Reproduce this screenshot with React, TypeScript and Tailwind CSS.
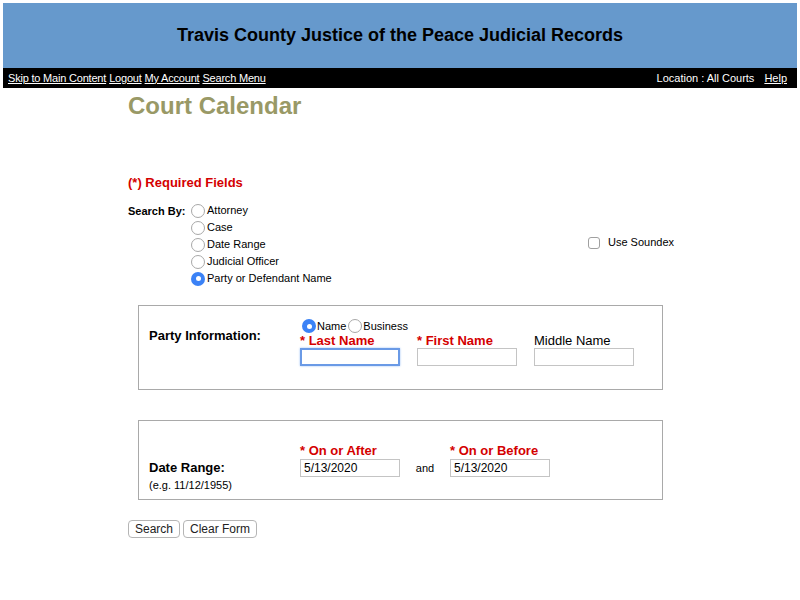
import React from 'react';

function Radio({ checked = false }: { checked?: boolean }) {
  if (checked) {
    return (
      <span className="inline-flex h-[14px] w-[14px] shrink-0 items-center justify-center rounded-full bg-[#3b82f6]">
        <span className="h-[5px] w-[5px] rounded-full bg-white" />
      </span>
    );
  }
  return <span className="inline-block h-[14px] w-[14px] shrink-0 rounded-full border border-[#a8a8a8] bg-white" />;
}

function TextBox({ value = '', focused = false }: { value?: string; focused?: boolean }) {
  return (
    <div
      className={
        focused
          ? 'h-[18px] w-[100px] border-2 border-[#6a9ae6] bg-white shadow-[0_0_2px_#9cc0f5]'
          : 'h-[18px] w-[100px] border border-[#c4c4c4] bg-white pl-[3px] text-[12px] leading-[17px] text-black'
      }
    >
      {value}
    </div>
  );
}

export default function App() {
  const searchOptions = ['Attorney', 'Case', 'Date Range', 'Judicial Officer', 'Party or Defendant Name'];

  return (
    <div className="h-[600px] w-[800px] bg-white px-[3px] pt-[3px] font-['Liberation_Sans',Arial,sans-serif] text-black">
      {/* Banner */}
      <div className="flex h-[65px] items-center justify-center bg-[#6699cc] pb-[2px]">
        <h1 className="text-[18px] font-bold leading-[20px]">Travis County Justice of the Peace Judicial Records</h1>
      </div>

      {/* Nav bar */}
      <div className="flex h-[20px] items-center justify-between bg-black px-[5px] text-[11px] leading-[13px] text-white">
        <div className="flex gap-[3px] tracking-[-0.2px]">
          <a className="underline">Skip to Main Content</a>
          <a className="underline">Logout</a>
          <a className="underline">My Account</a>
          <a className="underline">Search Menu</a>
        </div>
        <div className="flex gap-[10px] pr-[5px]">
          <span>Location : All Courts</span>
          <a className="underline">Help</a>
        </div>
      </div>

      <div className="pl-[125px]">
        <h2 className="mt-[4px] text-[24px] font-bold leading-[28px] text-[#999966]">Court Calendar</h2>

        <p className="mt-[55px] text-[13px] font-bold leading-[16px] text-[#d40000]">(*) Required Fields</p>

        {/* Search by */}
        <div className="mt-[11px] flex">
          <div className="w-[63px] pt-[3px] text-[11px] font-bold leading-[13px]">Search By:</div>
          <div className="flex w-[397px] flex-col">
            {searchOptions.map((opt, i) => (
              <label key={opt} className="flex h-[17px] items-center gap-[2px] text-[11px]">
                <Radio checked={i === searchOptions.length - 1} />
                <span>{opt}</span>
              </label>
            ))}
          </div>
          <label className="mt-[34px] flex h-[13px] items-center gap-[8px] self-start text-[11px]">
            <span className="h-[12px] w-[12px] rounded-[3px] border border-[#a0a0a0] bg-white" />
            <span>Use Soundex</span>
          </label>
        </div>

        {/* Party information */}
        <div className="ml-[10px] mt-[18px] flex h-[85px] w-[525px] border border-[#a9a9a9] pl-[10px]">
          <div className="w-[151px] pt-[22px] text-[13px] font-bold leading-[16px]">Party Information:</div>
          <div className="pt-[13px]">
            <div className="ml-[2px] flex h-[14px] items-center gap-[1px] text-[11px]">
              <Radio checked />
              <span className="mr-[1px]">Name</span>
              <Radio />
              <span>Business</span>
            </div>
            <div className="flex gap-[17px]">
              <div>
                <div className="pt-[1px] text-[13px] font-bold leading-[14px] text-[#d40000]">* Last Name</div>
                <TextBox focused />
              </div>
              <div>
                <div className="pt-[1px] text-[13px] font-bold leading-[14px] text-[#d40000]">* First Name</div>
                <TextBox />
              </div>
              <div>
                <div className="pt-[1px] text-[13px] leading-[14px]">Middle Name</div>
                <TextBox />
              </div>
            </div>
          </div>
        </div>

        {/* Date range */}
        <div className="ml-[10px] mt-[30px] flex h-[80px] w-[525px] border border-[#a9a9a9] pl-[10px]">
          <div className="w-[151px] pt-[39px]">
            <div className="text-[13px] font-bold leading-[16px]">Date Range:</div>
            <div className="pt-[1px] text-[11px] leading-[16px]">(e.g. 11/12/1955)</div>
          </div>
          <div className="flex items-end self-start pt-[22px]">
            <div>
              <div className="text-[13px] font-bold leading-[16px] text-[#d40000]">* On or After</div>
              <TextBox value="5/13/2020" />
            </div>
            <div className="flex h-[18px] w-[50px] items-center justify-center text-[11px]">and</div>
            <div>
              <div className="text-[13px] font-bold leading-[16px] text-[#d40000]">* On or Before</div>
              <TextBox value="5/13/2020" />
            </div>
          </div>
        </div>

        {/* Buttons */}
        <div className="mt-[20px] flex gap-[3px]">
          <button className="h-[18px] w-[52px] rounded-[4px] border border-[#b5b5b5] bg-white text-[12px] leading-[16px] text-[#222]">Search</button>
          <button className="h-[18px] w-[74px] rounded-[4px] border border-[#b5b5b5] bg-white text-[12px] leading-[16px] text-[#222]">Clear Form</button>
        </div>
      </div>
    </div>
  );
}
